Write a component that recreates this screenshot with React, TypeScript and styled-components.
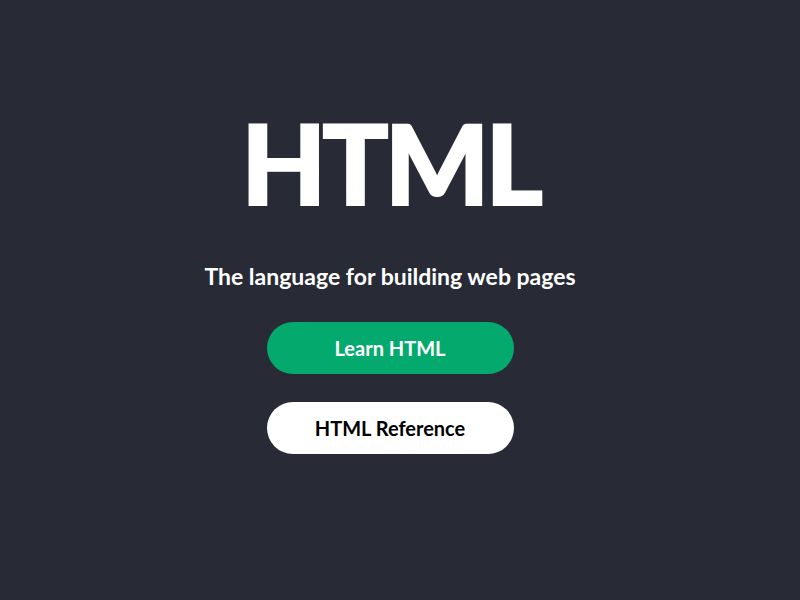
import React from "react";
import styled, { createGlobalStyle } from "styled-components";

const Global = createGlobalStyle`
  html, body { margin: 0; padding: 0; background: #282a35; }
  body { font-family: "Lato", "Open Sans", sans-serif; }
`;

const Hero = styled.main`
  width: 780px;
  height: 600px;
  box-sizing: border-box;
  background: #282a35;
  display: flex;
  flex-direction: column;
  align-items: center;
  padding-top: 102px;
`;

const Title = styled.h1`
  margin: 0;
  color: #fff;
  font-family: "Lato", sans-serif;
  font-weight: 900;
  font-size: 110px;
  line-height: 120px;
  letter-spacing: -4px;
  -webkit-text-stroke: 2px #fff;
`;

const Subtitle = styled.p`
  margin: 39px 0 0;
  color: #fff;
  font-family: "Lato", sans-serif;
  font-weight: 700;
  font-size: 23px;
  line-height: 30px;
`;

const Buttons = styled.div`
  display: flex;
  flex-direction: column;
  gap: 28px;
  margin-top: 31px;
`;

const Button = styled.a<{ $variant: "green" | "white" }>`
  display: flex;
  align-items: center;
  justify-content: center;
  width: 247px;
  height: 52px;
  border-radius: 26px;
  font-family: "Lato", sans-serif;
  font-weight: 700;
  font-size: 20px;
  text-decoration: none;
  background: ${(p) => (p.$variant === "green" ? "#04aa6d" : "#ffffff")};
  color: ${(p) => (p.$variant === "green" ? "#ffffff" : "#000000")};
`;

export default function App() {
  return (
    <>
      <Global />
      <Hero>
        <Title>HTML</Title>
        <Subtitle>The language for building web pages</Subtitle>
        <Buttons>
          <Button $variant="green" href="#">Learn HTML</Button>
          <Button $variant="white" href="#">HTML Reference</Button>
        </Buttons>
      </Hero>
    </>
  );
}
